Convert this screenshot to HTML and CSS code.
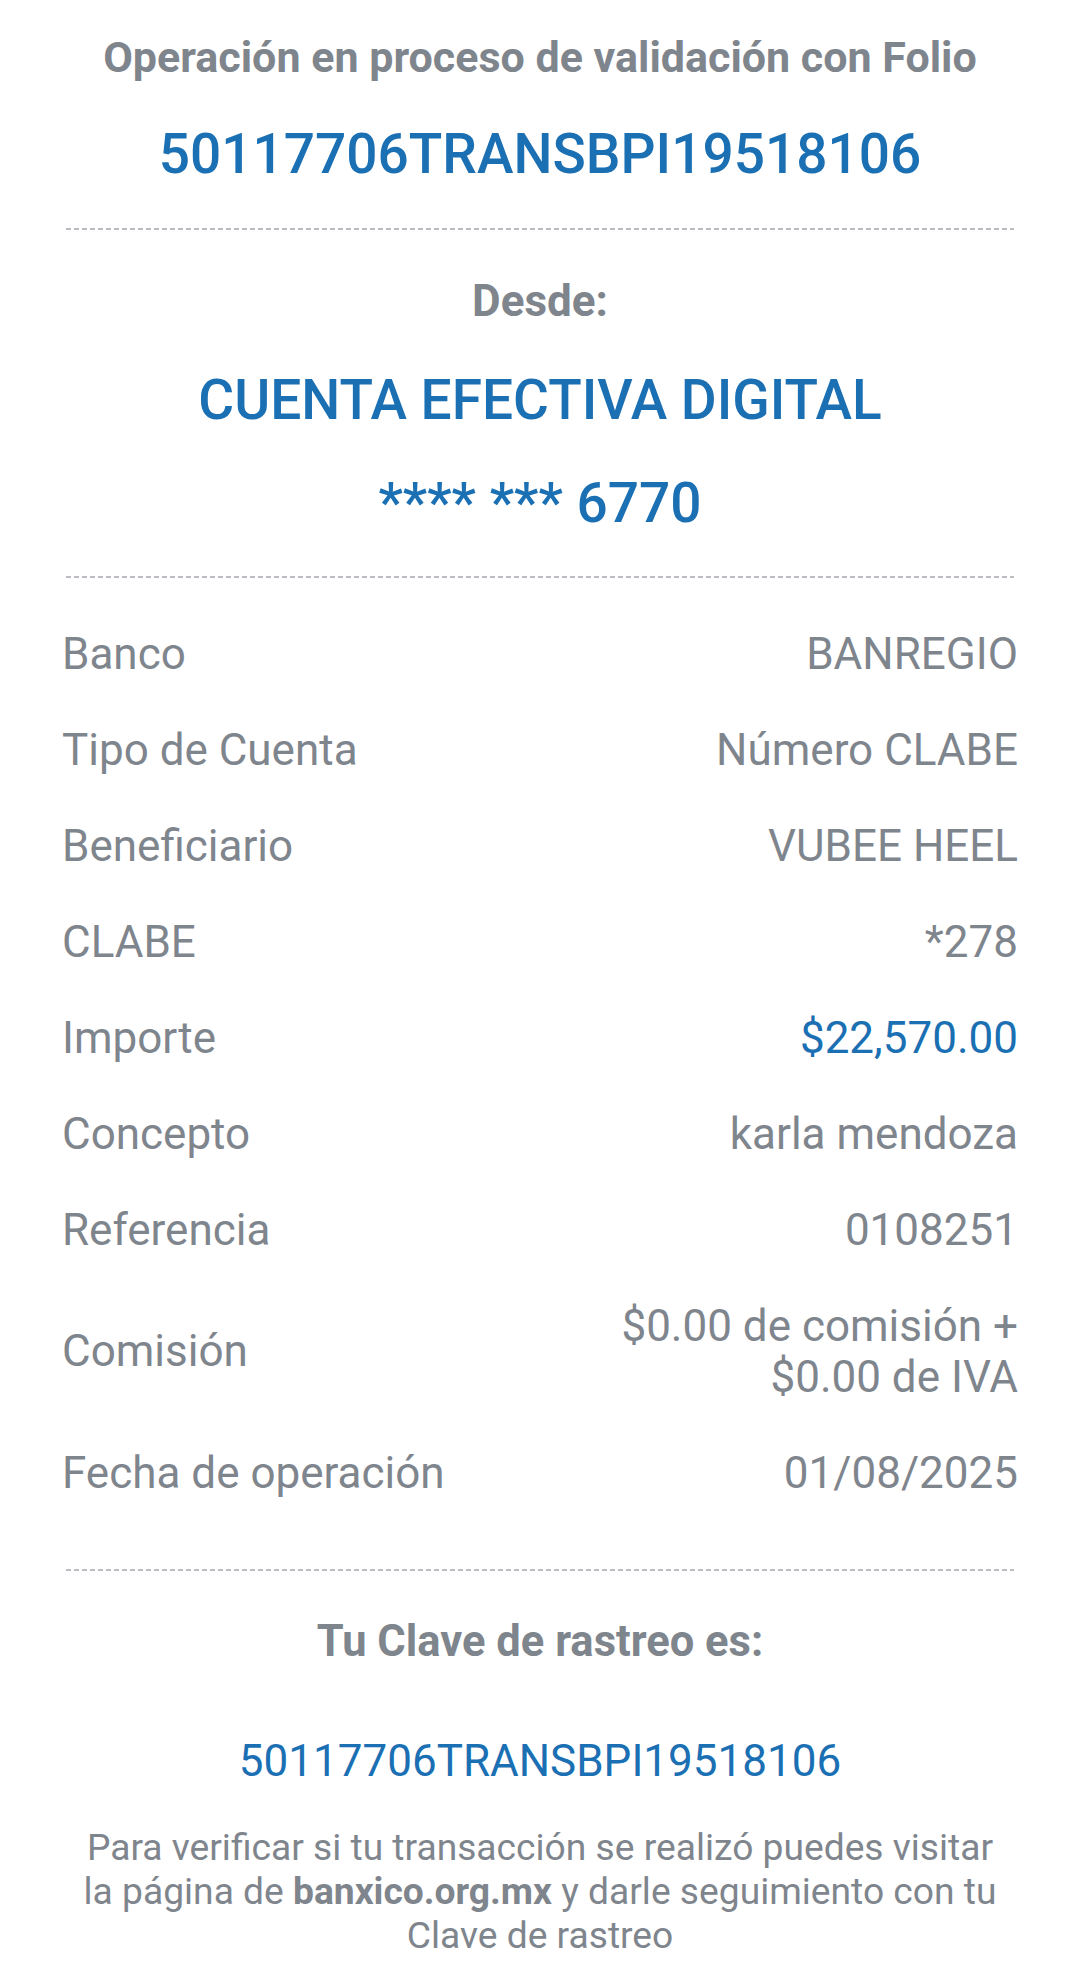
FILE: index.html
```html
<!DOCTYPE html>
<html lang="es">
<head>
    <meta charset="UTF-8">
    <meta name="viewport" content="width=device-width, initial-scale=1.0">
    <title>Comprobante de transferencia</title>
    <link rel="stylesheet" href="styles.css">
</head>
<body>
    <div class="receipt">
        <section class="folio-section">
            <h1 class="folio-title">Operación en proceso de validación con Folio</h1>
            <p class="folio-number">50117706TRANSBPI19518106</p>
        </section>
        <hr class="divider">
        <section class="origin-section">
            <h2 class="origin-label">Desde:</h2>
            <p class="origin-account">CUENTA EFECTIVA DIGITAL</p>
            <p class="origin-number">**** *** 6770</p>
        </section>
        <hr class="divider">
        <section class="details">
            <div class="row"><span class="label">Banco</span><span class="value">BANREGIO</span></div>
            <div class="row"><span class="label">Tipo de Cuenta</span><span class="value">Número CLABE</span></div>
            <div class="row"><span class="label">Beneficiario</span><span class="value">VUBEE HEEL</span></div>
            <div class="row"><span class="label">CLABE</span><span class="value">*278</span></div>
            <div class="row"><span class="label">Importe</span><span class="value amount">$22,570.00</span></div>
            <div class="row"><span class="label">Concepto</span><span class="value">karla mendoza</span></div>
            <div class="row"><span class="label">Referencia</span><span class="value">0108251</span></div>
            <div class="row"><span class="label">Comisión</span><span class="value">$0.00 de comisión +<br>$0.00 de IVA</span></div>
            <div class="row"><span class="label">Fecha de operación</span><span class="value">01/08/2025</span></div>
        </section>
        <hr class="divider">
        <section class="tracking">
            <h2 class="tracking-title">Tu Clave de rastreo es:</h2>
            <p class="tracking-key">50117706TRANSBPI19518106</p>
            <p class="tracking-note">Para verificar si tu transacción se realizó puedes visitar la página de <strong>banxico.org.mx</strong> y darle seguimiento con tu Clave de rastreo</p>
        </section>
    </div>
</body>
</html>
```

FILE: styles.css
```css
body {
    margin: 0;
    background: #ffffff;
    font-family: Roboto, "Noto Sans", Arial, sans-serif;
    color: #7f858d;
}

h1, h2, p {
    margin: 0;
    font-weight: normal;
}

.receipt {
    padding: 0 62px;
    text-align: center;
}

.divider {
    margin: 0 4px;
    height: 2px;
    border: none;
    background: repeating-linear-gradient(90deg, #b9bcc0 0, #b9bcc0 5px, transparent 5px, transparent 8px);
}

/* folio */
.folio-section {
    padding: 32px 0 39px;
}

.folio-title {
    margin: 0 -20px;
    font-size: 43px;
    line-height: 50px;
    font-weight: 700;
}

.folio-number {
    margin-top: 37px;
    font-size: 55px;
    line-height: 70px;
    font-weight: 500;
    color: #1b6fb3;
}

/* cuenta origen */
.origin-section {
    padding: 46px 0 38px;
}

.origin-label {
    font-size: 44px;
    line-height: 50px;
    font-weight: 700;
}

.origin-account {
    margin-top: 39px;
    font-size: 55px;
    line-height: 70px;
    font-weight: 500;
    color: #1b6fb3;
}

.origin-number {
    margin-top: 33px;
    font-size: 55px;
    line-height: 70px;
    font-weight: 500;
    color: #1b6fb3;
}

/* detalle */
.details {
    padding: 28px 0 48px;
}

.row {
    display: flex;
    justify-content: space-between;
    align-items: center;
    padding: 22.5px 0;
    font-size: 44px;
    line-height: 51px;
}

.label {
    text-align: left;
}

.value {
    text-align: right;
}

.amount {
    color: #1b6fb3;
}

/* rastreo */
.tracking {
    padding-top: 46px;
}

.tracking-title {
    font-size: 43.5px;
    line-height: 50px;
    font-weight: 700;
}

.tracking-key {
    margin-top: 64px;
    font-size: 44px;
    line-height: 60px;
    color: #1b6fb3;
}

.tracking-note {
    margin: 34px 20px 0;
    font-size: 37.2px;
    line-height: 44px;
}

.tracking-note strong {
    font-weight: 700;
}
```
